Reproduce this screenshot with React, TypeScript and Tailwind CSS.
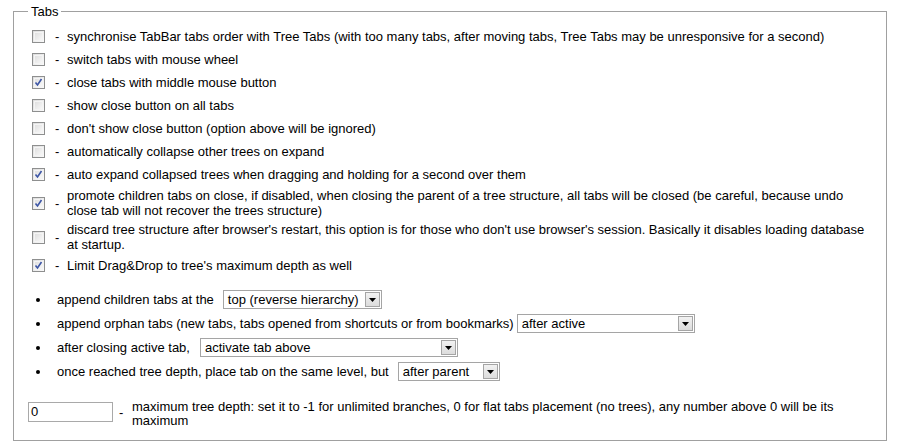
import React from "react";

const font = { fontFamily: '"Liberation Sans", Arial, sans-serif' };

function Check({ checked }: { checked?: boolean }) {
  return (
    <div className="relative w-[13px] h-[13px] shrink-0 border border-[#8e8f8f] bg-gradient-to-br from-[#dcdcdc] to-[#fbfbfb]">
      <div className="absolute inset-[1px] border border-[#f4f4f4] bg-gradient-to-br from-[#e0e0e0] to-[#f7f7f7]" />
      {checked && (
        <svg className="absolute left-[1px] top-[1px]" width="9" height="9" viewBox="0 0 9 9">
          <path d="M1.5 4.5 L3.5 7 L7.5 1" fill="none" stroke="#3d56a6" strokeWidth="1.6" />
        </svg>
      )}
    </div>
  );
}

function Row({ checked, children }: { checked?: boolean; children: React.ReactNode }) {
  return (
    <div className="flex items-center min-h-[23px] py-[2px]">
      <Check checked={checked} />
      <span className="ml-[10px] w-[4px] shrink-0">-</span>
      <div className="ml-[8px] leading-[15px]">{children}</div>
    </div>
  );
}

function Select({ value, w, ml }: { value: string; w: string; ml: string }) {
  return (
    <div className={`flex h-[19px] items-stretch border border-[#a5a5a5] bg-white ${w} ${ml}`}>
      <div className="flex-1 pl-[4px] leading-[17px] whitespace-nowrap overflow-hidden">{value}</div>
      <div className="m-[1px] w-[15px] flex items-center justify-center border border-[#a5a5a5] bg-gradient-to-b from-[#f2f2f2] to-[#dcdcdc]">
        <svg width="7" height="4" viewBox="0 0 7 4">
          <path d="M0 0 H7 L3.5 4 Z" fill="#000" />
        </svg>
      </div>
    </div>
  );
}

function Bullet({ children }: { children: React.ReactNode }) {
  return (
    <div className="flex items-center">
      <div className="ml-[22px] w-[4px] h-[4px] rounded-full bg-black shrink-0" />
      <div className="ml-[17px] flex items-center whitespace-nowrap">{children}</div>
    </div>
  );
}

export default function App() {
  return (
    <div className="w-[898px] h-[447px] bg-white text-[13px] leading-[15px] text-black" style={font}>
      <div className="pt-[4px] pl-[13px]">
        <fieldset className="w-[874px] border border-[#a0a0a0] shadow-[inset_1px_1px_0_#fff,1px_1px_0_#fff] pb-[12px]">
          <legend className="ml-[14px] px-[3px] leading-[15px]">Tabs</legend>
          <div className="pl-[18px] pr-[10px] pt-[6px] flex flex-col">
            <Row>synchronise TabBar tabs order with Tree Tabs (with too many tabs, after moving tabs, Tree Tabs may be unresponsive for a second)</Row>
            <Row>switch tabs with mouse wheel</Row>
            <Row checked>close tabs with middle mouse button</Row>
            <Row>show close button on all tabs</Row>
            <Row>don't show close button (option above will be ignored)</Row>
            <Row>automatically collapse other trees on expand</Row>
            <Row checked>auto expand collapsed trees when dragging and holding for a second over them</Row>
            <Row checked>promote children tabs on close, if disabled, when closing the parent of a tree structure, all tabs will be closed (be careful, because undo close tab will not recover the trees structure)</Row>
            <Row>discard tree structure after browser's restart, this option is for those who don't use browser's session. Basically it disables loading database at startup.</Row>
            <Row checked>Limit Drag&amp;Drop to tree's maximum depth as well</Row>
          </div>
          <div className="mt-[13px] flex flex-col gap-[5px]">
            <Bullet>
              <span>append children tabs at the</span>
              <Select value="top (reverse hierarchy)" w="w-[159px]" ml="ml-[9px]" />
            </Bullet>
            <Bullet>
              <span>append orphan tabs (new tabs, tabs opened from shortcuts or from bookmarks)</span>
              <Select value="after active" w="w-[178px]" ml="ml-[3px]" />
            </Bullet>
            <Bullet>
              <span>after closing active tab,</span>
              <Select value="activate tab above" w="w-[258px]" ml="ml-[10px]" />
            </Bullet>
            <Bullet>
              <span>once reached tree depth, place tab on the same level, but</span>
              <Select value="after parent" w="w-[102px]" ml="ml-[9px]" />
            </Bullet>
          </div>
          <div className="mt-[19px] ml-[14px] flex items-start">
            <div className="mt-[2px] w-[85px] h-[20px] border border-[#a9a9a9] pl-[2px] leading-[18px]">0</div>
            <span className="mt-[5px] ml-[6px] w-[4px]">-</span>
            <div className="ml-[9px] leading-[14px] w-[720px]">maximum tree depth: set it to -1 for unlimited branches, 0 for flat tabs placement (no trees), any number above 0 will be its maximum</div>
          </div>
        </fieldset>
      </div>
    </div>
  );
}
